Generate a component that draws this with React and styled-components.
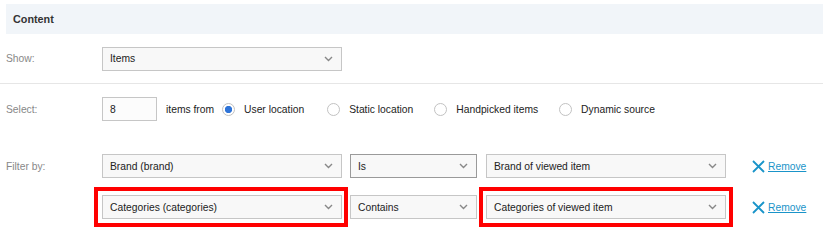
import React from "react";
import styled, { createGlobalStyle } from "styled-components";

const GlobalStyle = createGlobalStyle`
  body {
    margin: 0;
    background: #ffffff;
    font-family: "Liberation Sans", Arial, sans-serif;
    font-size: 10.3px;
    color: #222;
  }
`;

const Page = styled.div`
  width: 823px;
  height: 240px;
  padding-top: 4px;
  box-sizing: border-box;
  overflow: hidden;
`;

const Header = styled.div`
  display: flex;
  align-items: center;
  height: 30px;
  margin-left: 6px;
  padding-left: 7px;
  background: #f1f5f9;
  font-weight: bold;
  font-size: 10.8px;
  color: #333;
`;

const Row = styled.div`
  display: flex;
  align-items: center;
  height: ${(p) => p.h}px;
  padding-left: 6px;
`;

const Label = styled.div`
  width: 96px;
  flex-shrink: 0;
  color: #888;
`;

const Divider = styled.div`
  height: 1px;
  background: #e6e6e6;
`;

const SelectBox = styled.div`
  position: relative;
  display: flex;
  align-items: center;
  justify-content: space-between;
  box-sizing: border-box;
  width: ${(p) => p.w}px;
  height: 24px;
  padding: 0 8px 0 7px;
  margin-right: ${(p) => p.mr || 0}px;
  background: #f8f8f8;
  border: 1px solid ${(p) => (p.dark ? "#9a9a9a" : "#c6c6c6")};
  color: #222;

  ${(p) =>
    p.highlight &&
    `
    &::after {
      content: "";
      position: absolute;
      top: -9px;
      bottom: -9px;
      left: ${-p.highlight[0]}px;
      right: ${-p.highlight[1]}px;
      border: 4px solid #ff0000;
      pointer-events: none;
    }
  `}
`;

const Chevron = () => (
  <svg width="9" height="6" viewBox="0 0 9 6">
    <path d="M1 1l3.5 3.5L8 1" fill="none" stroke="#888" strokeWidth="1.4" />
  </svg>
);

const Select = ({ w, mr, dark, highlight, children }) => (
  <SelectBox w={w} mr={mr} dark={dark} highlight={highlight}>
    <span>{children}</span>
    <Chevron />
  </SelectBox>
);

const NumberInput = styled.div`
  display: flex;
  align-items: center;
  box-sizing: border-box;
  width: 55px;
  height: 24px;
  padding-left: 7px;
  background: #fcfcfc;
  border: 1px solid #c6c6c6;
`;

const Text = styled.span`
  margin-left: ${(p) => p.ml || 0}px;
  color: #222;
`;

const Radio = styled.span`
  box-sizing: border-box;
  width: 13px;
  height: 13px;
  border-radius: 50%;
  margin-left: ${(p) => p.ml}px;
  margin-right: 9px;
  border: 1px solid #c2c2c2;
  background: ${(p) =>
    p.checked
      ? "radial-gradient(circle, #2f74d8 0 3.4px, #ffffff 3.9px)"
      : "#ffffff"};
  flex-shrink: 0;
`;

const FilterArea = styled.div`
  display: flex;
  flex-direction: column;
  gap: 17px;
  padding-top: 20px;
`;

const RemoveLink = styled.a`
  display: flex;
  align-items: center;
  gap: 3px;
  margin-left: 26px;
  color: #1a94c9;
  cursor: pointer;

  span {
    text-decoration: underline;
  }
`;

const CrossIcon = () => (
  <svg width="13" height="13" viewBox="0 0 13 13">
    <path d="M1 1l11 11M12 1L1 12" stroke="#1a94c9" strokeWidth="1.8" />
  </svg>
);

const filters = [
  { label: "Filter by:", field: "Brand (brand)", op: "Is", value: "Brand of viewed item", dark: true },
  { label: "", field: "Categories (categories)", op: "Contains", value: "Categories of viewed item", highlight: true },
];

const App = () => (
  <Page>
    <GlobalStyle />
    <Header>Content</Header>
    <Row h={49}>
      <Label>Show:</Label>
      <Select w={240}>Items</Select>
    </Row>
    <Divider />
    <Row h={50}>
      <Label>Select:</Label>
      <NumberInput>8</NumberInput>
      <Text ml={9}>items from</Text>
      <Radio checked ml={8} />
      <Text>User location</Text>
      <Radio ml={23} />
      <Text>Static location</Text>
      <Radio ml={21} />
      <Text>Handpicked items</Text>
      <Radio ml={21} />
      <Text>Dynamic source</Text>
    </Row>
    <FilterArea>
      {filters.map((f) => (
        <Row h={24} key={f.field}>
          <Label>{f.label}</Label>
          <Select w={240} mr={8} highlight={f.highlight ? [9, 7] : null}>
            {f.field}
          </Select>
          <Select w={127} mr={9} dark={f.dark}>
            {f.op}
          </Select>
          <Select w={240} highlight={f.highlight ? [8, 8] : null}>
            {f.value}
          </Select>
          <RemoveLink>
            <CrossIcon />
            <span>Remove</span>
          </RemoveLink>
        </Row>
      ))}
    </FilterArea>
  </Page>
);

export default App;
